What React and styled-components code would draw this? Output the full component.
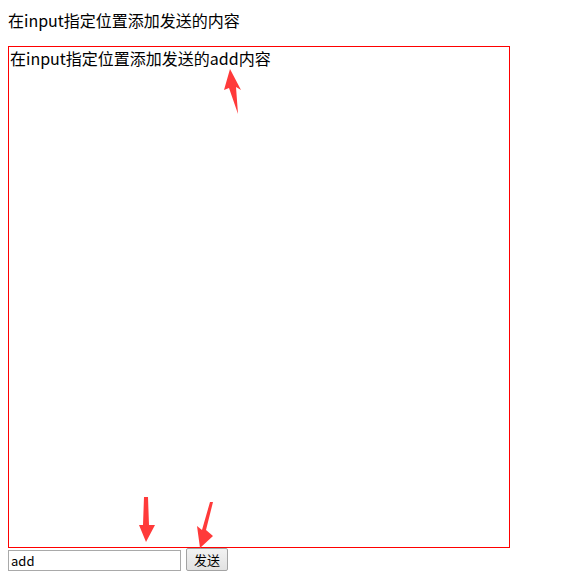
import React, { useState } from 'react'
import styled, { createGlobalStyle } from 'styled-components'

const GlobalStyle = createGlobalStyle`
  html, body {
    margin: 0;
    padding: 0;
    background: #fff;
  }
  body {
    font-family: "Noto Sans CJK SC", "DejaVu Sans", sans-serif;
    color: #000;
  }
`

const Page = styled.div`
  position: relative;
  width: 562px;
  height: 586px;
  box-sizing: border-box;
  padding: 8px;
`

const Title = styled.div`
  font-size: 16px;
  line-height: 24px;
  height: 24px;
  margin-bottom: 14px;
`

const Board = styled.div`
  width: 499px;
  height: 500px;
  padding-left: 1px;
  border: 1px solid #ff0000;
  font-size: 16px;
  line-height: 22px;
`

const Controls = styled.div`
  display: flex;
  align-items: flex-end;
  gap: 5px;
  height: 23px;
`

const TextInput = styled.input`
  width: 173px;
  height: 21px;
  box-sizing: border-box;
  border: 1px solid #a9a9a9;
  padding: 0 2px;
  margin: 0;
  font-family: "Noto Sans CJK SC", "DejaVu Sans", sans-serif;
  font-size: 13px;
  line-height: 19px;
  outline: none;
  color: #000;
`

const SendButton = styled.button`
  width: 42px;
  height: 23px;
  box-sizing: border-box;
  margin: 0;
  padding: 0;
  border: 1px solid #a3a3a3;
  border-radius: 2px;
  background: linear-gradient(#f2f2f2, #e2e2e2);
  font-family: "Noto Sans CJK SC", sans-serif;
  font-size: 13px;
  line-height: 20px;
  color: #000;
`

const Marks = styled.svg`
  position: absolute;
  top: 0;
  left: 0;
  pointer-events: none;
`

const arrow = '#ff3a3a'

export default function App() {
  const [value, setValue] = useState('add')

  return (
    <>
      <GlobalStyle />
      <Page>
        <Title>在input指定位置添加发送的内容</Title>
        <Board>在input指定位置添加发送的add内容</Board>
        <Controls>
          <TextInput value={value} onChange={(e) => setValue(e.target.value)} />
          <SendButton>发送</SendButton>
        </Controls>
        <Marks width="562" height="586" viewBox="0 0 562 586">
          {/* pointing up at the inserted text */}
          <polygon fill={arrow} points="230,69 241,90 236,87 238,114 229,88 224,90" />
          {/* pointing down at the input */}
          <polygon fill={arrow} points="144,497 148,497 149,525 155,525 146,542 139,525 143,525" />
          {/* pointing at the button */}
          <polygon fill={arrow} points="213,502 206,530 213,536 200,548 197,526 202,530 210,502" />
        </Marks>
      </Page>
    </>
  )
}
